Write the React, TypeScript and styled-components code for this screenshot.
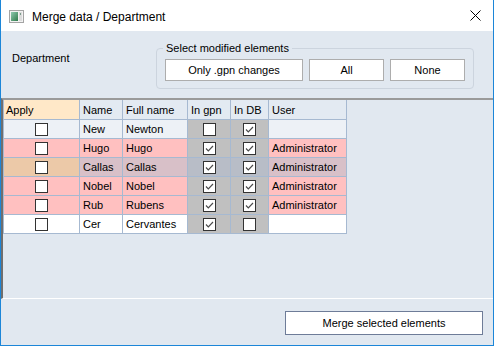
import React from "react";
import styled, { createGlobalStyle } from "styled-components";

const Global = createGlobalStyle`
  html, body { margin: 0; padding: 0; background: #ffffff; }
  body { font-family: "Liberation Sans", Arial, sans-serif; font-size: 11px; color: #000; }
  * { box-sizing: border-box; }
`;

const LINE = "#a6b9d1";

const Window = styled.div`
  width: 494px;
  height: 346px;
  border: 1px solid #1c86d8;
  border-top: none;
  background: #e1e8f0;
  display: flex;
  flex-direction: column;
`;

const TitleBar = styled.div`
  height: 31px;
  background: #ffffff;
  display: flex;
  align-items: center;
  padding-left: 8px;
  padding-top: 1px;
`;

const TitleText = styled.span`
  font-size: 12px;
  margin-left: 8px;
  flex: 1;
  padding-top: 1px;
`;

const CloseBox = styled.div`
  width: 46px;
  height: 30px;
  display: flex;
  align-items: center;
  justify-content: center;
  padding-left: 10px;
  padding-bottom: 1px;
`;

const TopPanel = styled.div`
  height: 67px;
  display: flex;
  align-items: flex-start;
  padding: 17px 0 0 11px;
`;

const FieldLabel = styled.div`
  width: 144px;
  margin-top: 3px;
  line-height: 14px;
`;

const GroupBox = styled.div`
  position: relative;
  width: 318px;
  height: 41px;
  border: 1px solid #ccd4de;
  border-radius: 4px;
  display: flex;
  gap: 6px;
  padding: 10px 0 0 8px;
`;

const GroupLegend = styled.span`
  position: absolute;
  top: -8px;
  left: 6px;
  padding: 0 3px;
  background: #e1e8f0;
  line-height: 14px;
`;

const Button = styled.button<{ $w: number; $h?: number; $strong?: boolean }>`
  width: ${(p) => p.$w}px;
  height: ${(p) => p.$h ?? 22}px;
  background: #ffffff;
  border: 1px solid ${(p) => (p.$strong ? "#6e7c98" : "#adadad")};
  font-family: "Liberation Sans", Arial, sans-serif;
  font-size: 11px;
  color: #000;
  padding: 0;
  margin: 0;
`;

const GridArea = styled.div`
  height: 201px;
  border-top: 2px solid #9a9a9a;
  border-left: 2px solid #6f6f6f;
  border-bottom: 1px solid #ffffff;
`;

const Grid = styled.div`
  display: grid;
  grid-template-columns: 76px 43px 65px 43px 38px 78px;
  grid-template-rows: 20px repeat(6, 19px);
  width: 344px;
  border-left: 1px solid ${LINE};
`;

type Tone =
  | "head"
  | "headApply"
  | "fresh"
  | "changed"
  | "plain"
  | "gray"
  | "selApply"
  | "sel"
  | "selGray";

const toneColor: Record<Tone, string> = {
  head: "#e3eaf2",
  headApply: "#ffe8c8",
  fresh: "#edf1f6",
  changed: "#ffc0c0",
  plain: "#ffffff",
  gray: "#c0c0c0",
  selApply: "#ecc9a8",
  sel: "#d8c0c8",
  selGray: "#b8bdc7",
};

const Cell = styled.div<{ $tone: Tone; $center?: boolean; $pad?: number }>`
  background: ${(p) => toneColor[p.$tone]};
  border-right: 1px solid ${LINE};
  border-bottom: 1px solid ${LINE};
  display: flex;
  align-items: center;
  justify-content: ${(p) => (p.$center ? "center" : "flex-start")};
  padding-left: ${(p) => (p.$center ? 0 : p.$pad ?? 3)}px;
  white-space: nowrap;
  overflow: hidden;
  line-height: 14px;
`;

const Box = styled.span`
  width: 13px;
  height: 13px;
  border: 1px solid #333333;
  background: #ffffff;
  display: inline-flex;
`;

const Check = ({ on }: { on: boolean }) => (
  <Box>
    {on && (
      <svg width="11" height="11" viewBox="0 0 11 11">
        <polyline
          points="2,5.5 4.3,7.8 9,3"
          fill="none"
          stroke="#4a4a4a"
          strokeWidth="1.2"
        />
      </svg>
    )}
  </Box>
);

const BottomPanel = styled.div`
  flex: 1;
  display: flex;
  justify-content: flex-end;
  align-items: flex-start;
  padding: 12px 10px 0 0;
`;

const AppIcon = () => (
  <svg width="15" height="13" viewBox="0 0 15 13">
    <rect x="0.5" y="0.5" width="14" height="12" fill="#f2f2f2" stroke="#a4a4a4" />
    <defs>
      <linearGradient id="ig" x1="0" y1="0" x2="1" y2="1">
        <stop offset="0" stopColor="#8fc9b0" />
        <stop offset="1" stopColor="#2f7a4a" />
      </linearGradient>
    </defs>
    <rect x="2" y="2" width="7" height="9" fill="url(#ig)" />
    <rect x="10" y="2" width="3" height="9" fill="#dcdcdc" />
    <rect x="11" y="3" width="1" height="2" fill="#7a9a8a" />
  </svg>
);

type Kind = "fresh" | "changed" | "sel" | "plain";
type Row = { name: string; full: string; gpn: boolean; db: boolean; user: string; kind: Kind };

const rows: Row[] = [
  { name: "New", full: "Newton", gpn: false, db: true, user: "", kind: "fresh" },
  { name: "Hugo", full: "Hugo", gpn: true, db: true, user: "Administrator", kind: "changed" },
  { name: "Callas", full: "Callas", gpn: true, db: true, user: "Administrator", kind: "sel" },
  { name: "Nobel", full: "Nobel", gpn: true, db: true, user: "Administrator", kind: "changed" },
  { name: "Rub", full: "Rubens", gpn: true, db: true, user: "Administrator", kind: "changed" },
  { name: "Cer", full: "Cervantes", gpn: true, db: false, user: "", kind: "plain" },
];

const tones = (k: Kind): { apply: Tone; text: Tone; gray: Tone } => {
  if (k === "sel") return { apply: "selApply", text: "sel", gray: "selGray" };
  return { apply: k, text: k, gray: "gray" };
};

export default function App() {
  return (
    <>
      <Global />
      <Window>
        <TitleBar>
          <AppIcon />
          <TitleText>Merge data / Department</TitleText>
          <CloseBox>
            <svg width="11" height="11" viewBox="0 0 11 11">
              <path d="M0.5 0.5 L10.5 10.5 M10.5 0.5 L0.5 10.5" stroke="#000" strokeWidth="1" />
            </svg>
          </CloseBox>
        </TitleBar>
        <TopPanel>
          <FieldLabel>Department</FieldLabel>
          <GroupBox>
            <GroupLegend>Select modified elements</GroupLegend>
            <Button $w={138}>Only .gpn changes</Button>
            <Button $w={75}>All</Button>
            <Button $w={75}>None</Button>
          </GroupBox>
        </TopPanel>
        <GridArea>
          <Grid>
            <Cell $tone="headApply" $pad={2}>Apply</Cell>
            <Cell $tone="head">Name</Cell>
            <Cell $tone="head">Full name</Cell>
            <Cell $tone="head">In gpn</Cell>
            <Cell $tone="head">In DB</Cell>
            <Cell $tone="head">User</Cell>
            {rows.map((r) => {
              const t = tones(r.kind);
              return (
                <React.Fragment key={r.name}>
                  <Cell $tone={t.apply} $center>
                    <Check on={false} />
                  </Cell>
                  <Cell $tone={t.text}>{r.name}</Cell>
                  <Cell $tone={t.text}>{r.full}</Cell>
                  <Cell $tone={t.gray} $center>
                    <Check on={r.gpn} />
                  </Cell>
                  <Cell $tone={t.gray} $center>
                    <Check on={r.db} />
                  </Cell>
                  <Cell $tone={t.text}>{r.user}</Cell>
                </React.Fragment>
              );
            })}
          </Grid>
        </GridArea>
        <BottomPanel>
          <Button $w={198} $h={24} $strong>
            Merge selected elements
          </Button>
        </BottomPanel>
      </Window>
    </>
  );
}
